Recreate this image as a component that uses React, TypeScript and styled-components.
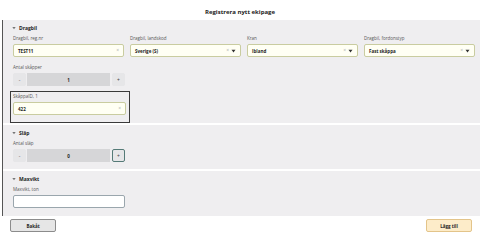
import React from "react"
import styled, { createGlobalStyle } from "styled-components"

const GlobalStyle = createGlobalStyle`
  html, body {
    margin: 0;
    padding: 0;
    background: #ffffff;
    font-family: "Open Sans", "Noto Sans", sans-serif;
    color: #222;
  }
`

function Caret() {
  return (
    <CaretIcon width="4" height="4" viewBox="0 0 4 4">
      <path d="M0.3 1 L3.7 1 L2 3.3 Z" fill="#777" />
    </CaretIcon>
  )
}

function Clear() {
  return <ClearMark>×</ClearMark>
}

function Arrow() {
  return (
    <svg width="5" height="4" viewBox="0 0 5 4">
      <path d="M0.5 0.8 L4.5 0.8 L2.5 3.4 Z" fill="#333" />
    </svg>
  )
}

interface FieldProps {
  label: string
  value: string
  select?: boolean
}

function Field({ label, value, select = false }: FieldProps) {
  return (
    <FieldBox>
      <Label>{label}</Label>
      <InputBox>
        <Value>{value}</Value>
        <Clear />
        {select ? <Arrow /> : null}
      </InputBox>
    </FieldBox>
  )
}

function Stepper({ label, value, focused = false }: { label: string; value: string; focused?: boolean }) {
  return (
    <FieldBox>
      <Label>{label}</Label>
      <StepRow>
        <StepButton>-</StepButton>
        <StepValue>{value}</StepValue>
        <StepButton focused={focused}>+</StepButton>
      </StepRow>
    </FieldBox>
  )
}

export default function App() {
  return (
    <>
      <GlobalStyle />
      <Page>
        <Header>Registrera nytt ekipage</Header>
        <Main>
          <Section>
            <SectionTitle>
              <Caret />
              Dragbil
            </SectionTitle>
            <Grid>
              <Field label="Dragbil, reg.nr" value="TEST11" />
              <Field label="Dragbil, landskod" value="Sverige (S)" select />
              <Field label="Kran" value="Ibland" select />
              <Field label="Dragbil, fordonstyp" value="Fast skåppa" select />
            </Grid>
            <Narrow spaced>
              <Stepper label="Antal skåpper" value="1" />
            </Narrow>
            <IdBox>
              <Field label="SkåppaID, 1" value="422" />
            </IdBox>
          </Section>
          <Section>
            <SectionTitle>
              <Caret />
              Släp
            </SectionTitle>
            <Narrow>
              <Stepper label="Antal släp" value="0" focused />
            </Narrow>
          </Section>
          <Section last>
            <SectionTitle>
              <Caret />
              Maxvikt
            </SectionTitle>
            <Narrow>
              <FieldBox>
                <Label>Maxvikt, ton</Label>
                <PlainInput />
              </FieldBox>
            </Narrow>
          </Section>
        </Main>
        <Footer>
          <BackButton>Bakåt</BackButton>
          <AddButton>Lägg till</AddButton>
        </Footer>
      </Page>
    </>
  )
}

const Page = styled.div`
  width: 480px;
  height: 240px;
  display: flex;
  flex-direction: column;
  overflow: hidden;
`

const Header = styled.div`
  flex-shrink: 0;
  height: 20px;
  display: flex;
  align-items: center;
  justify-content: center;
  font-size: 6px;
  font-weight: 700;
  color: #222;
  padding-top: 4px;
  box-sizing: border-box;
`

const Main = styled.div`
  flex-shrink: 0;
  margin-left: 2px;
  border-left: 1px solid #555;
  display: flex;
  flex-direction: column;
`

const Section = styled.div<{ last?: boolean }>`
  background: #efeef0;
  padding: 4px 5px ${p => (p.last ? "8px" : "7px")} 7px;
  border-bottom: ${p => (p.last ? "none" : "2px solid #fff")};
`

const SectionTitle = styled.div`
  height: 8px;
  display: flex;
  align-items: center;
  gap: 3px;
  padding-left: 2px;
  font-size: 5px;
  font-weight: 700;
  color: #222;
  margin-bottom: 3px;
`

const CaretIcon = styled.svg`
  display: block;
`

const Grid = styled.div`
  display: grid;
  grid-template-columns: repeat(4, 1fr);
  column-gap: 6px;
  padding-left: 3px;
`

const Narrow = styled.div<{ spaced?: boolean }>`
  width: 112px;
  padding-left: 3px;
  margin-top: ${p => (p.spaced ? "7px" : "0")};
`

const IdBox = styled.div`
  width: 113px;
  margin-top: 5px;
  margin-bottom: -7px;
  border: 1px solid #3a3a3a;
  padding: 1px 3px 7px 2px;
`

const FieldBox = styled.div`
  display: flex;
  flex-direction: column;
`

const Label = styled.div`
  height: 6px;
  line-height: 6px;
  font-size: 4.5px;
  color: #555;
  margin-bottom: 3px;
  white-space: nowrap;
`

const InputBox = styled.div`
  height: 13px;
  box-sizing: border-box;
  border: 1px solid #c9cca0;
  border-radius: 2px;
  background: #fffff4;
  display: flex;
  align-items: center;
  gap: 2px;
  padding: 0 4px 0 4px;
`

const Value = styled.span`
  flex: 1;
  font-size: 4.5px;
  font-weight: 700;
  color: #222;
`

const ClearMark = styled.span`
  font-size: 5px;
  color: #aaa;
  line-height: 1;
`

const PlainInput = styled.div`
  height: 13px;
  box-sizing: border-box;
  border: 1px solid #9aa6ad;
  border-radius: 2px;
  background: #ffffff;
`

const StepRow = styled.div`
  height: 13px;
  display: flex;
  gap: 1px;
`

const StepButton = styled.div<{ focused?: boolean }>`
  width: 13px;
  box-sizing: border-box;
  display: flex;
  align-items: center;
  justify-content: center;
  background: #e6e6e8;
  border: 1px solid ${p => (p.focused ? "#557a77" : "#e6e6e8")};
  border-radius: 2px;
  font-size: 5px;
  color: #444;
`

const StepValue = styled.div`
  flex: 1;
  margin-right: 1px;
  display: flex;
  align-items: center;
  justify-content: center;
  background: #d6d6d8;
  font-size: 4.5px;
  font-weight: 700;
  color: #222;
`

const Footer = styled.div`
  flex: 1;
  display: flex;
  justify-content: space-between;
  align-items: flex-start;
  padding: 3px 8px 0 10px;
`

const BaseButton = styled.div`
  width: 46px;
  height: 13px;
  box-sizing: border-box;
  border-radius: 2px;
  display: flex;
  align-items: center;
  justify-content: center;
  font-size: 4.5px;
  font-weight: 700;
  color: #222;
`

const BackButton = styled(BaseButton)`
  background: #e6e6e6;
  border: 1px solid #8c8c8c;
`

const AddButton = styled(BaseButton)`
  background: #fdecc9;
  border: 1px solid #e3c48a;
`
